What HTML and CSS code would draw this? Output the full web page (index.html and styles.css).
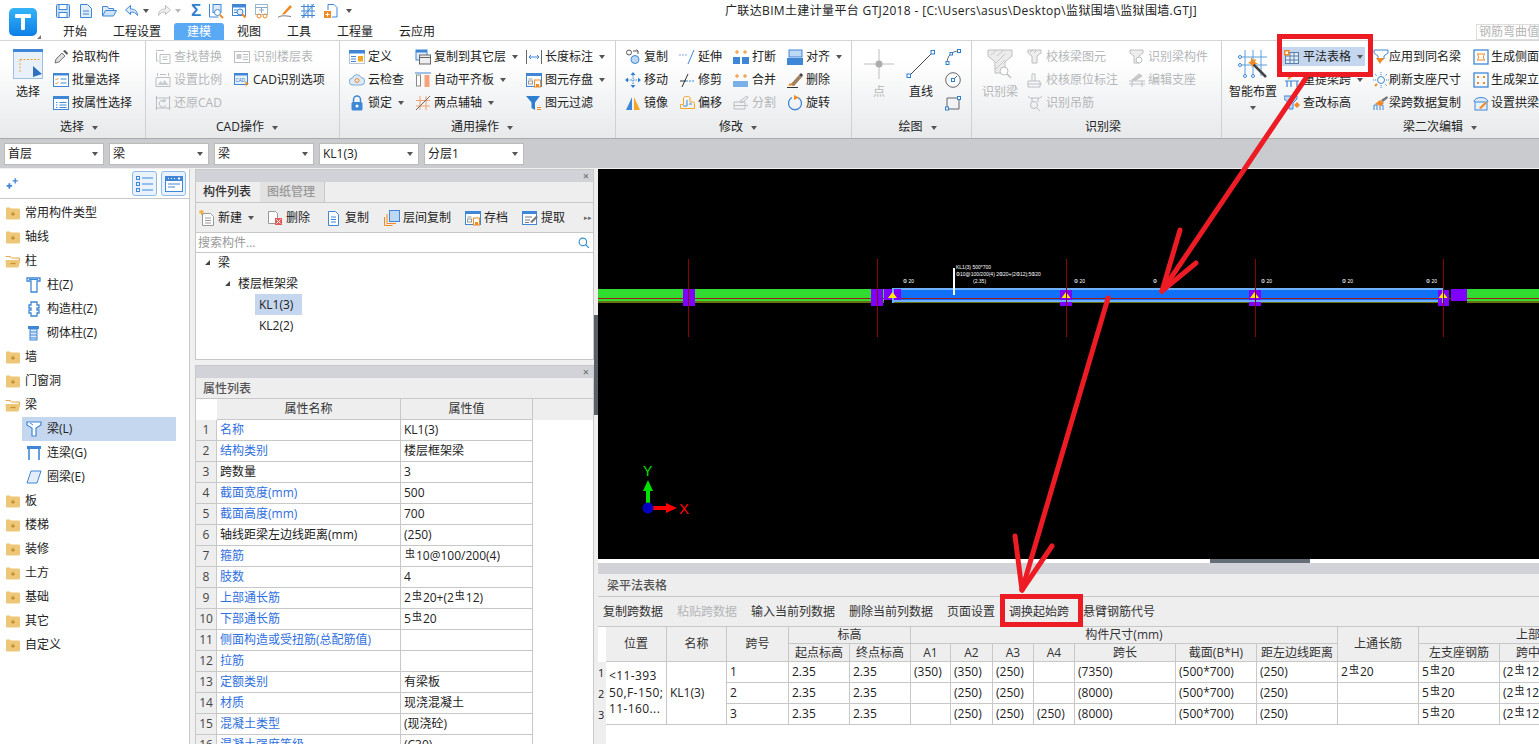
FILE: index.html
```html
<!DOCTYPE html>
<html lang="zh-CN">
<head>
<meta charset="utf-8">
<title>广联达BIM土建计量平台 GTJ2018</title>
<link rel="stylesheet" href="styles.css">
</head>
<body>
<svg class="sprite" xmlns="http://www.w3.org/2000/svg">
<defs>
<symbol id="save" viewBox="0 0 16 16"><rect x="1.5" y="1.5" width="13" height="13" rx="1" fill="#cfe3f8" stroke="#3f87d6"/><rect x="4" y="1.5" width="8" height="5" fill="#fff" stroke="#3f87d6"/><rect x="4" y="9.5" width="8" height="5" fill="#fff" stroke="#3f87d6"/></symbol>
<symbol id="doc" viewBox="0 0 16 16"><path d="M2.5 1.5h7l4 4v9h-11z" fill="#e3eefa" stroke="#3f87d6"/><path d="M5 8h6M5 11h6" stroke="#3f87d6"/></symbol>
<symbol id="open" viewBox="0 0 16 16"><path d="M1.5 13V3.500h5l1 2h5v2" fill="#e3eefa" stroke="#3f87d6"/><path d="M1.500 13l3-5.500h11l-3 5.500z" fill="#cfe3f8" stroke="#3f87d6"/></symbol>
<symbol id="undo" viewBox="0 0 16 16"><path d="M6.500 2.500L1.500 7l5 4.500V9c3 0 5.500 .5 7 3.500 0-4.500-2.500-6.500-7-6.500z" fill="#dbe9f8" stroke="#3f87d6"/></symbol>
<symbol id="redo" viewBox="0 0 16 16"><path d="M9.500 2.500l5 4.500-5 4.500V9c-3 0-5.500 .5-7 3.500 0-4.500 2.500-6.500 7-6.500z" fill="#f2f2f2" stroke="#bbbec2"/></symbol>
<symbol id="qa1" viewBox="0 0 16 16"><path d="M1.500 1v13h9" fill="none" stroke="#3f87d6"/><rect x="5" y="1.500" width="8" height="8" fill="#dbe9f8" stroke="#3f87d6"/><circle cx="9.500" cy="9.500" r="3" fill="#fff" stroke="#3f87d6"/><path d="M12 12l3 3" stroke="#f08a24" stroke-width="2"/></symbol>
<symbol id="qa2" viewBox="0 0 16 16"><rect x="1.500" y="1.500" width="13" height="11" fill="#fff" stroke="#3f87d6"/><rect x="1.500" y="1.500" width="13" height="3" fill="#3f87d6"/><circle cx="9" cy="9" r="3" fill="#e3eefa" stroke="#3f87d6"/><path d="M11 11l3.500 3.500" stroke="#f08a24" stroke-width="2"/><path d="M3 7h3M3 9.500h3" stroke="#3f87d6"/></symbol>
<symbol id="qa3" viewBox="0 0 16 16"><rect x="1.500" y="1.500" width="12" height="10" fill="#fff" stroke="#9fb8d4"/><path d="M1.500 4.500h12M5 7h5M7.500 5v5" stroke="#8aa8c8"/><circle cx="5" cy="13" r="2" fill="none" stroke="#f08a24"/><circle cx="11" cy="13" r="2" fill="none" stroke="#f08a24"/></symbol>
<symbol id="qa4" viewBox="0 0 16 16"><path d="M6 10l7-8 2 2-7 7-3 1z" fill="#f08a24"/><path d="M1 14.500c2-2 6-2 13-1" fill="none" stroke="#777"/></symbol>
<symbol id="qa5" viewBox="0 0 16 16"><path d="M1 3.500h14M1 8h14M1 12.500h14M4 1v14M8 1v14M12 1v14M2 15L14 1" fill="none" stroke="#3f87d6"/></symbol>
<symbol id="qa6" viewBox="0 0 16 16"><path d="M5 7V1.500h6l3 3V14h-5" fill="#fff" stroke="#3f87d6"/><rect x="1" y="8" width="7" height="7" fill="#f08a24"/><path d="M4.500 9.500v4M2.500 11.500h4" stroke="#fff"/></symbol>
<symbol id="big-sel" viewBox="0 0 30 30"><rect x=".5" y=".5" width="29" height="29" fill="#e8f1fa" stroke="#9fc0e4"/><rect width="30" height="3" fill="#3f87d6"/><path d="M7 10.500h20M7 10.500v14" fill="none" stroke="#f0a030" stroke-dasharray="2 1.500"/><path d="M20 17l9 8-9 3z" fill="#2f6fc0"/></symbol>
<symbol id="drop" viewBox="0 0 16 16"><path d="M3 10l6-6 3 3-6 6-4 1z" fill="#ddd" stroke="#777"/><path d="M10 2l2-1 3 3-1 2z" fill="#555"/></symbol>
<symbol id="batch" viewBox="0 0 16 16"><rect x=".5" y="1.500" width="15" height="13" fill="#fff" stroke="#3f87d6"/><rect y="1" width="16" height="2.500" fill="#3f87d6"/><path d="M2.500 7l1 1 2-2M2.500 11l1 1 2-2" fill="none" stroke="#f08a24"/><path d="M7.500 7h6M7.500 11h6" stroke="#3f87d6"/></symbol>
<symbol id="bya" viewBox="0 0 16 16"><rect x=".5" y="1.500" width="15" height="13" fill="#fff" stroke="#3f87d6"/><rect y="1" width="16" height="3" fill="#3f87d6"/><path d="M6.500 7.500h7M6.500 10h7M6.500 12.500h7M3 7.500h1.500M3 10h1.500M3 12.500h1.500" stroke="#3f87d6"/></symbol>
<symbol id="find" viewBox="0 0 16 16" stroke="#bbbec2" fill="none"><path d="M1 1.500h8M5 5.500h10v9H5zM7.500 8h5M7.500 10.500h5M1.500 3v9h2"/></symbol>
<symbol id="scale" viewBox="0 0 16 16" stroke="#bbbec2" fill="none"><path d="M1 5.500h14v9H1zM2.500 1v3M13.500 1v3M5 2.500h6"/><path d="M2.500 13l3-4 2 2 2-3 4 5z" fill="#c9ccd0" stroke="none"/></symbol>
<symbol id="rest" viewBox="0 0 16 16" stroke="#bbbec2" fill="none"><path d="M1.500 1v14M14.500 1v14M.5 3h15M.5 13h15M11 10a3.500 3.500 0 1 1-1-4M10 3.500V6.500h-3"/></symbol>
<symbol id="floor" viewBox="0 0 16 16" stroke="#bbbec2" fill="none"><rect x=".5" y="2.500" width="15" height="11"/><rect x="2.500" y="5" width="5" height="5" fill="#c9ccd0" stroke="none"/><path d="M9 5.500h5M9 8h5M9 10.500h5"/></symbol>
<symbol id="cad" viewBox="0 0 16 16"><rect x=".5" y="1.500" width="13" height="11" fill="#e8f1fa" stroke="#3f87d6"/><rect y="1" width="14" height="2.500" fill="#3f87d6"/><text x="1.500" y="10" font-size="4.500" font-family="Liberation Sans" fill="#2f6fc0">CAD</text><path d="M11 9l4 3-2 .5L12 15z" fill="#f08a24"/></symbol>
<symbol id="def" viewBox="0 0 16 16"><rect x=".5" y="1.500" width="15" height="13" fill="#fff" stroke="#b9c4cf"/><rect y="1" width="16" height="3.500" fill="#3f87d6"/><path d="M2 7.500h5M2 10h5M2 12.500h5" stroke="#3f87d6"/><rect x="9" y="7" width="5" height="5.500" fill="#f5a623"/></symbol>
<symbol id="cloud" viewBox="0 0 16 16"><path d="M4 13a3.500 3.500 0 0 1-.5-7 4.500 4.500 0 0 1 8.500-.5A3.700 3.700 0 0 1 12 13z" fill="#dbe9f8" stroke="#7aa8d8"/><circle cx="8" cy="8.500" r="2" fill="none" stroke="#f08a24"/></symbol>
<symbol id="lock" viewBox="0 0 16 16"><path d="M4.500 7V4.500a3.500 3.500 0 0 1 7 0V7" fill="none" stroke="#3f87d6" stroke-width="1.500"/><rect x="2.500" y="7" width="11" height="8.500" rx="1.500" fill="#3f87d6"/><circle cx="8" cy="11" r="1.500" fill="#fff"/></symbol>
<symbol id="copyl" viewBox="0 0 16 16"><rect x="1" y="1" width="11" height="10" fill="#e3eefa" stroke="#3f87d6"/><rect x="1" y="1" width="11" height="2.500" fill="#3f87d6"/><rect x="4.500" y="6" width="11" height="9" fill="#eee" stroke="#666"/><path d="M4.500 8.500h11" stroke="#666"/></symbol>
<symbol id="flush" viewBox="0 0 16 16"><path d="M0 1h16" stroke="#3f87d6"/><rect x="1.500" y="3" width="4" height="11" fill="#fff" stroke="#888"/><rect x="9.500" y="3" width="5" height="12" fill="#f5a27a"/></symbol>
<symbol id="aux" viewBox="0 0 16 16" fill="none"><path d="M5 1v14M11 1v14M1 5.500h14M1 11h14" stroke="#f0a070"/><path d="M1 15L15 1" stroke="#666"/></symbol>
<symbol id="dim" viewBox="0 0 16 16" fill="none"><path d="M.5 1v14M15.500 1v14" stroke="#666"/><path d="M3 8h10M5 6L3 8l2 2M11 6l2 2-2 2" stroke="#3f87d6"/></symbol>
<symbol id="store" viewBox="0 0 16 16"><rect x=".5" y="1.500" width="15" height="13" fill="#fff" stroke="#3f87d6"/><rect y="1" width="16" height="3" fill="#3f87d6"/><rect x="2.500" y="6.500" width="4" height="1" fill="#999"/><rect x="2.500" y="9" width="4" height="3" fill="none" stroke="#999"/><rect x="8.500" y="8" width="6" height="7" fill="#fff" stroke="#f08a24"/><rect x="10" y="12" width="3" height="3" fill="#f08a24"/></symbol>
<symbol id="filter" viewBox="0 0 16 16"><path d="M0 1h14L9 7.500V15L5.500 13V7.500z" fill="#2f7fd0"/><path d="M11 12.500h4M11 14.500h4" stroke="#f08a24"/></symbol>
<symbol id="copy" viewBox="0 0 16 16" fill="none"><circle cx="4" cy="3.500" r="2.500" stroke="#555"/><circle cx="10" cy="10.500" r="4" fill="#bcd8f5" stroke="#3f87d6"/><path d="M8 2h5l-1.500-1.500M13 2v3" stroke="#555"/></symbol>
<symbol id="extend" viewBox="0 0 16 16" fill="none"><path d="M0 6h9" stroke="#7aa8d8" stroke-dasharray="2 1"/><path d="M9 15L15 1" stroke="#3f87d6"/></symbol>
<symbol id="trim" viewBox="0 0 16 16" fill="none"><path d="M1 9h6" stroke="#333"/><path d="M7 9h9" stroke="#3f87d6" stroke-dasharray="2 1"/><path d="M3 15l6-13" stroke="#333"/></symbol>
<symbol id="move" viewBox="0 0 16 16"><path d="M8 0l2.500 3h-5zM8 16l2.500-3h-5zM0 8l3-2.500v5zM16 8l-3-2.500v5z" fill="#2f7fd0"/><path d="M8 3v10M3 8h10" stroke="#2f7fd0" stroke-dasharray="1.500 1"/></symbol>
<symbol id="mirror" viewBox="0 0 16 16"><path d="M7 2v13H1z" fill="#3f87d6"/><path d="M9 2v13h6z" fill="#f5a623"/></symbol>
<symbol id="offset" viewBox="0 0 16 16" fill="none"><path d="M1.500 13.500v-4h3V4a2 2 0 0 1 2-2.500h2A2 2 0 0 1 11 4v3h3a1.500 1.500 0 0 1 1.500 1.500v5z" stroke="#f5a623"/><path d="M4 11h4V5M10 9h3" stroke="#3f87d6"/></symbol>
<symbol id="break" viewBox="0 0 16 16"><path d="M0 8h7v7H0zM9 8h7v7H9z" fill="#3f87d6"/><path d="M2 3h4M4 1v4M10 3h4M12 1v4" stroke="#f08a24"/></symbol>
<symbol id="merge" viewBox="0 0 16 16"><path d="M0 9h15v6H0z" fill="#7ab0e8"/><path d="M2 4h4M4 2v4M10 4h4M12 2v4" stroke="#f08a24"/></symbol>
<symbol id="split" viewBox="0 0 16 16" fill="none" stroke="#bbbec2"><path d="M1 7h11v7H1zM1 10.500h14M7 6l7-5 1 2-7 5z"/></symbol>
<symbol id="align" viewBox="0 0 16 16"><rect x="2" y="1" width="13" height="7" fill="#bcd8f5" stroke="#3f87d6"/><rect y="9" width="16" height="7" fill="#3f87d6"/></symbol>
<symbol id="del" viewBox="0 0 16 16"><path d="M0 15.500h11" stroke="#333"/><path d="M3 13L12 3l3 2-8 9z" fill="#a08060"/><path d="M12 3l2-2 2 2-1 2z" fill="#444"/><path d="M1 14l2-3 3 2z" fill="#f08a24"/></symbol>
<symbol id="rotate" viewBox="0 0 16 16" fill="none"><path d="M5 2.500a6.500 6.500 0 1 0 6 0" stroke="#3f87d6" stroke-width="1.300"/><path d="M7 0l5 2.500-5 2.500z" fill="#f08a24"/></symbol>
<symbol id="point" viewBox="0 0 30 30"><path d="M15 0v30M0 15h30" stroke="#bbbec2"/><circle cx="15" cy="15" r="3.500" fill="#aaadb0"/></symbol>
<symbol id="line" viewBox="0 0 30 30"><path d="M3 27L27 3" stroke="#444"/><rect x="1" y="25" width="3.500" height="3.500" fill="#fff" stroke="#2f7fd0"/><rect x="25" y="1.500" width="3.500" height="3.500" fill="#fff" stroke="#2f7fd0"/></symbol>
<symbol id="arc" viewBox="0 0 16 16" fill="none"><path d="M2 14C2 7 7 2 14 2" stroke="#666"/><rect x="1" y="12.500" width="3" height="3" fill="#fff" stroke="#2f7fd0"/><rect x="12.500" y=".5" width="3" height="3" fill="#fff" stroke="#2f7fd0"/><rect x="5" y="3.500" width="2.500" height="2.500" fill="#fff" stroke="#2f7fd0"/></symbol>
<symbol id="circle" viewBox="0 0 16 16" fill="none"><circle cx="8" cy="8" r="7.300" stroke="#666"/><path d="M8 8l4-4" stroke="#666"/><rect x="6.500" y="6.500" width="3" height="3" fill="#fff" stroke="#2f7fd0"/></symbol>
<symbol id="rect" viewBox="0 0 16 16" fill="none"><path d="M2 3h12v11H2z" stroke="#666"/><rect x=".5" y="12" width="3" height="3" fill="#fff" stroke="#2f7fd0"/><rect x="12.500" y="1.500" width="3" height="3" fill="#fff" stroke="#2f7fd0"/></symbol>
<symbol id="recog" viewBox="0 0 30 30"><path d="M3 1h24v6l-7 6v11H10V13L3 7z" fill="#ececec" stroke="#bbbec2"/><path d="M6 6l6-5M12 7l7-6M11 14l9-9M11 20l9-9" stroke="#c6c8cb"/><circle cx="19" cy="22" r="4" fill="#fff" stroke="#bbbec2"/><path d="M22 25l4 4" stroke="#bbbec2" stroke-width="1.500"/></symbol>
<symbol id="chk1" viewBox="0 0 16 16" fill="none" stroke="#bbbec2"><path d="M1 1h13v3l-4 3v7H5V7L1 4z" fill="#eee"/><path d="M3 3l3-2M7 4l3-3"/></symbol>
<symbol id="chk2" viewBox="0 0 16 16" fill="none" stroke="#bbbec2"><path d="M1 9h12v6H1zM5 9V2h3v7M1 12h14"/></symbol>
<symbol id="hang" viewBox="0 0 16 16" fill="none" stroke="#bbbec2"><path d="M1 1l2 2h10l2-2M5 3v4M11 3v4"/><circle cx="7" cy="10" r="3.500"/><path d="M10 13l3 3"/></symbol>
<symbol id="chk3" viewBox="0 0 16 16" fill="none" stroke="#bbbec2"><path d="M1 1h13v3l-4 3v7H5V7L1 4z" fill="#eee"/><circle cx="10" cy="11" r="3" fill="#fff"/></symbol>
<symbol id="sup" viewBox="0 0 16 16" fill="none" stroke="#bbbec2"><path d="M0 9h16M3 9v6M13 9v6M0 12h16"/><path d="M3 8l7-6 3 2-6 4z" fill="#ccc"/></symbol>
<symbol id="smart" viewBox="0 0 30 30" fill="none"><path d="M7 1v26M15 1v26M23 1v26M2 8h27M2 16h27" stroke="#5b9ee0"/><path d="M13 13l15 15" stroke="#444" stroke-width="2.500"/><path d="M13 8l2 3 3-1-1 3 3 2-4 0-2 3-1-3-3-1 3-2z" fill="#f08a24"/><circle cx="2" cy="8" r="1.500" fill="#fff" stroke="#3f87d6"/><circle cx="2" cy="16" r="1.500" fill="#fff" stroke="#3f87d6"/><circle cx="7" cy="27" r="1.500" fill="#fff" stroke="#3f87d6"/><circle cx="15" cy="27" r="1.500" fill="#fff" stroke="#3f87d6"/></symbol>
<symbol id="table" viewBox="0 0 16 16"><rect x="1.500" y="3.500" width="13" height="11" fill="#e3eefa" stroke="#5a7fa8"/><path d="M1.500 7h13M1.500 11h13M6 3.500v11M10 3.500v11" stroke="#5a7fa8"/><rect y="1" width="5.500" height="5.500" fill="#f08a24"/><rect x="1.500" y="2.500" width="2.500" height="2.500" fill="#fff"/></symbol>
<symbol id="respan" viewBox="0 0 16 16" fill="none"><path d="M1 9h14M3 9v6M13 9v6M7 9v6" stroke="#3f87d6" stroke-width="1.200"/><path d="M4 7l7-6" stroke="#f08a24" stroke-width="2"/></symbol>
<symbol id="elev" viewBox="0 0 16 16"><path d="M0 1h13v3l-4 4v6H5V8L0 4z" fill="#bcd8f5" stroke="#3f87d6"/><path d="M10 10l3-3 3 3-3 3z" fill="#f08a24"/></symbol>
<symbol id="apply" viewBox="0 0 16 16"><path d="M1 1h14v3l-4 3v3H5V7L1 4z" fill="#fff" stroke="#3f87d6"/><path d="M3 9h8l-4 6z" fill="#f08a24"/></symbol>
<symbol id="refresh" viewBox="0 0 16 16" fill="none"><circle cx="8" cy="8" r="3.500" stroke="#3f87d6"/><path d="M8 0v3M8 13v3M0 8h3M13 8h3M2 2l2 2M12 12l2 2M14 2l-2 2" stroke="#3f87d6" stroke-dasharray="1 1"/><path d="M2 14l2-2" stroke="#f08a24" stroke-width="2"/></symbol>
<symbol id="brush" viewBox="0 0 16 16"><path d="M1 15V10h3v5M7 15v-5h3v5" fill="none" stroke="#3f87d6"/><path d="M2 9l5-4 4 3-3 3z" fill="#f08a24"/><path d="M8 5l6-4 1 2-5 4z" fill="#777"/></symbol>
<symbol id="side" viewBox="0 0 16 16" fill="none"><rect x="1" y="1" width="14" height="14" stroke="#3f87d6" stroke-width="1.300"/><path d="M4 5h8M4 11h8M4 5c2 1 2 5 0 6M12 5c-2 1-2 5 0 6" stroke="#f08a24"/></symbol>
<symbol id="erect" viewBox="0 0 16 16"><rect x="1" y="1" width="14" height="14" fill="none" stroke="#3f87d6" stroke-width="1.300"/><path d="M4 4h2v2H4zM10 4h2v2h-2zM4 10h2v2H4zM10 10h2v2h-2z" fill="#f08a24"/></symbol>
<symbol id="arch" viewBox="0 0 16 16"><path d="M1 7C1 1 15 1 15 7" fill="#dbe9f8" stroke="#3f87d6"/><rect x="2" y="7" width="12" height="8" fill="#e8f1fa" stroke="#3f87d6"/><path d="M6 13l6-6 2 1-6 6z" fill="#f08a24"/></symbol>
<symbol id="fplus" viewBox="0 0 16 16"><path d="M1 3.500q0-1 1-1h3l1 1h7q2 0 2 1v9q0 1-1 1H2q-1 0-1-1z" fill="#eec678"/><path d="M6 9h4M8 7v4" stroke="#c8922e" stroke-width="1.300"/></symbol>
<symbol id="fminus" viewBox="0 0 16 16"><path d="M.5 3.500h5l1 1.500h8v2" fill="#fbe6b8" stroke="#dcb060"/><path d="M.5 7h15l-2 7.500H1z" fill="#eec678"/><path d="M5.500 10.500h5" stroke="#c8922e" stroke-width="1.300"/></symbol>
<symbol id="col" viewBox="0 0 16 16" fill="none" stroke="#3f87d6"><path d="M1 1h13v3h-3v11H5V4H1z" stroke-width="1.300"/><path d="M3 2.500h9" /></symbol>
<symbol id="col2" viewBox="0 0 16 16" fill="none" stroke="#3f87d6" stroke-width="1.300"><path d="M5 1h6v3h2v3h-2v2h2v3h-2v3H5v-3H3V9h2V7H3V4h2z"/></symbol>
<symbol id="col3" viewBox="0 0 16 16"><rect x="2" y="1" width="11" height="3" fill="#3f87d6"/><rect x="4" y="4" width="7" height="11" fill="#dbe9f8" stroke="#3f87d6"/><path d="M4 7h7M4 10h7M4 13h7" stroke="#3f87d6"/></symbol>
<symbol id="beam" viewBox="0 0 16 16" fill="none" stroke="#3f87d6"><path d="M1 1h14v3l-5 3v8H6V7L1 4z" fill="#fff" stroke-width="1.200"/><path d="M4 2l3 2" stroke="#3f87d6"/></symbol>
<symbol id="lian" viewBox="0 0 16 16"><rect x="1" y="1" width="14" height="3" fill="#3f87d6"/><path d="M3 4v11M13 4v11" stroke="#3f87d6" stroke-width="1.600"/></symbol>
<symbol id="ring" viewBox="0 0 16 16"><path d="M5 2h10l-4 12H1z" fill="#e3eefa" stroke="#3f87d6"/></symbol>
<symbol id="newd" viewBox="0 0 16 16"><path d="M3.500 3.500h8l3 3v9h-11z" fill="#fff" stroke="#999"/><path d="M6 8h6M6 10.500h6M6 13h6" stroke="#999"/><path d="M0 2h5M2.500 0v5M1 .5l3 3M4 .5l-3 3" stroke="#f5a623"/></symbol>
<symbol id="deld" viewBox="0 0 16 16"><path d="M1.500 1.500h7l2 2v10h-9z" fill="#fff" stroke="#999"/><rect x="8" y="8" width="7" height="7" fill="#e25a5a"/><path d="M9.500 9.500l4 4M13.500 9.500l-4 4" stroke="#fff"/></symbol>
<symbol id="copyd" viewBox="0 0 16 16"><path d="M2.500 1.500h7l3 3v11h-10z" fill="#fff" stroke="#3f87d6"/><path d="M5 7h5M5 9.500h5M5 12h5" stroke="#3f87d6"/></symbol>
<symbol id="layers" viewBox="0 0 16 16"><rect x="5.500" y=".5" width="10" height="11" fill="#bcd8f5" stroke="#3f87d6"/><path d="M3 4v9.500h9M.5 7v8.500h8" fill="none" stroke="#f08a24"/></symbol>
<symbol id="pull" viewBox="0 0 16 16"><rect x=".5" y="1.500" width="14" height="13" fill="#fff" stroke="#3f87d6"/><rect y="1" width="15" height="3" fill="#3f87d6"/><path d="M3 7h7M3 10h5M3 12.500h4" stroke="#777"/><path d="M8 12l6-6 2 1-6 6z" fill="#777"/></symbol>
<symbol id="hdr1" viewBox="0 0 18 18" fill="none" stroke="#3f87d6"><rect x=".5" y="1.500" width="3" height="3"/><rect x=".5" y="7.500" width="3" height="3"/><rect x=".5" y="13.500" width="3" height="3"/><path d="M6 3h11M6 9h11M6 15h11"/></symbol>
<symbol id="hdr2" viewBox="0 0 18 18"><rect x=".5" y="1.500" width="17" height="15" fill="#fff" stroke="#3f87d6"/><rect y="1" width="18" height="5" fill="#3f87d6"/><path d="M3 3.500h1M6 3.500h1M9 3.500h1M13 3l2 0-1 1.500z" fill="#fff" stroke="#fff"/><path d="M3 9h12M3 12h7" stroke="#3f87d6"/></symbol>
<symbol id="sparks" viewBox="0 0 16 16"><path d="M4 6h3v3h3v3H7v3H4v-3H1V9h3z" fill="#3f87d6" transform="scale(.7) translate(0 4)"/><path d="M11 1h2v3h3v2h-3v3h-2V6H8V4h3z" fill="#3f87d6" transform="scale(.75) translate(2 1)"/></symbol>
<symbol id="mag" viewBox="0 0 16 16" fill="none" stroke="#2f8fd0" stroke-width="1.500"><circle cx="6.500" cy="6.500" r="5"/><path d="M10 10l4.500 4.500"/></symbol>
</defs>
</svg>

<div class="page">
  <header class="top">
    <div class="logo">
      <svg class="logo-mark" viewBox="0 0 28 28"><defs><linearGradient id="lg" x1="0" y1="0" x2="0" y2="1"><stop offset="0" stop-color="#35b4f8"/><stop offset="1" stop-color="#0c7fe6"/></linearGradient></defs><rect width="28" height="28" rx="5" fill="url(#lg)"/><rect x="6" y="6" width="16" height="4" rx="1" fill="#fff"/><rect x="12" y="6" width="4" height="16" rx="1" fill="#fff"/></svg>
      <span class="logo-corner"></span>
    </div>
    <div class="top-main">
      <div class="qat">
        <svg class="qi"><use href="#save"/></svg>
        <svg class="qi"><use href="#doc"/></svg>
        <svg class="qi"><use href="#open"/></svg>
        <span class="qgroup"><svg class="qi"><use href="#undo"/></svg><i class="caret qcaret"></i></span>
        <span class="qgroup"><svg class="qi"><use href="#redo"/></svg><i class="caret qcaret off"></i></span>
        <span class="sigma">Σ</span>
        <svg class="qi"><use href="#qa1"/></svg>
        <svg class="qi"><use href="#qa2"/></svg>
        <svg class="qi"><use href="#qa3"/></svg>
        <svg class="qi"><use href="#qa4"/></svg>
        <svg class="qi"><use href="#qa5"/></svg>
        <svg class="qi"><use href="#qa6"/></svg>
        <i class="caret qmore"></i>
        <span class="title">广联达BIM土建计量平台 GTJ2018 - [C:\Users\asus\Desktop\监狱围墙\监狱围墙.GTJ]</span>
      </div>
      <nav class="tabs">
        <span class="tab">开始</span><span class="tab">工程设置</span><span class="tab active">建模</span><span class="tab">视图</span><span class="tab">工具</span><span class="tab">工程量</span><span class="tab">云应用</span>
        <span class="topsearch">钢筋弯曲值调</span>
      </nav>
    </div>
  </header>

  <section class="ribbon">
    <div class="grp g1"><div class="gb">
      <div class="big"><svg class="b30"><use href="#big-sel"/></svg><span>选择</span></div>
      <div class="col c1-1">
        <div class="it"><svg class="i"><use href="#drop"/></svg>拾取构件</div>
        <div class="it"><svg class="i"><use href="#batch"/></svg>批量选择</div>
        <div class="it"><svg class="i"><use href="#bya"/></svg>按属性选择</div>
      </div></div><div class="gl">选择<i class="caret"></i></div></div>

    <div class="grp g2"><div class="gb">
      <div class="col c2-1">
        <div class="it off"><svg class="i"><use href="#find"/></svg>查找替换</div>
        <div class="it off"><svg class="i"><use href="#scale"/></svg>设置比例</div>
        <div class="it off"><svg class="i"><use href="#rest"/></svg>还原CAD</div>
      </div>
      <div class="col">
        <div class="it off"><svg class="i"><use href="#floor"/></svg>识别楼层表</div>
        <div class="it"><svg class="i"><use href="#cad"/></svg>CAD识别选项</div>
      </div></div><div class="gl">CAD操作<i class="caret"></i></div></div>

    <div class="grp g3"><div class="gb">
      <div class="col c3-1">
        <div class="it"><svg class="i"><use href="#def"/></svg>定义</div>
        <div class="it"><svg class="i"><use href="#cloud"/></svg>云检查</div>
        <div class="it"><svg class="i"><use href="#lock"/></svg>锁定<i class="caret"></i></div>
      </div>
      <div class="col c3-2">
        <div class="it"><svg class="i"><use href="#copyl"/></svg>复制到其它层<i class="caret"></i></div>
        <div class="it"><svg class="i"><use href="#flush"/></svg>自动平齐板<i class="caret"></i></div>
        <div class="it"><svg class="i"><use href="#aux"/></svg>两点辅轴<i class="caret"></i></div>
      </div>
      <div class="col">
        <div class="it"><svg class="i"><use href="#dim"/></svg>长度标注<i class="caret"></i></div>
        <div class="it"><svg class="i"><use href="#store"/></svg>图元存盘<i class="caret"></i></div>
        <div class="it"><svg class="i"><use href="#filter"/></svg>图元过滤</div>
      </div></div><div class="gl">通用操作<i class="caret"></i></div></div>

    <div class="grp g4"><div class="gb">
      <div class="col c4">
        <div class="it"><svg class="i"><use href="#copy"/></svg>复制</div>
        <div class="it"><svg class="i"><use href="#move"/></svg>移动</div>
        <div class="it"><svg class="i"><use href="#mirror"/></svg>镜像</div>
      </div>
      <div class="col c4">
        <div class="it"><svg class="i"><use href="#extend"/></svg>延伸</div>
        <div class="it"><svg class="i"><use href="#trim"/></svg>修剪</div>
        <div class="it"><svg class="i"><use href="#offset"/></svg>偏移</div>
      </div>
      <div class="col c4">
        <div class="it"><svg class="i"><use href="#break"/></svg>打断</div>
        <div class="it"><svg class="i"><use href="#merge"/></svg>合并</div>
        <div class="it off"><svg class="i"><use href="#split"/></svg>分割</div>
      </div>
      <div class="col">
        <div class="it"><svg class="i"><use href="#align"/></svg>对齐<i class="caret"></i></div>
        <div class="it"><svg class="i"><use href="#del"/></svg>删除</div>
        <div class="it"><svg class="i"><use href="#rotate"/></svg>旋转</div>
      </div></div><div class="gl">修改<i class="caret"></i></div></div>

    <div class="grp g5"><div class="gb">
      <div class="big off"><svg class="b30"><use href="#point"/></svg><span>点</span></div>
      <div class="big b-line"><svg class="b30"><use href="#line"/></svg><span>直线</span></div>
      <div class="col c5">
        <div class="it"><svg class="i"><use href="#arc"/></svg></div>
        <div class="it"><svg class="i"><use href="#circle"/></svg></div>
        <div class="it"><svg class="i"><use href="#rect"/></svg></div>
      </div></div><div class="gl">绘图<i class="caret"></i></div></div>

    <div class="grp g6"><div class="gb">
      <div class="big off"><svg class="b30"><use href="#recog"/></svg><span>识别梁</span></div>
      <div class="col c6-1">
        <div class="it off"><svg class="i"><use href="#chk1"/></svg>校核梁图元</div>
        <div class="it off"><svg class="i"><use href="#chk2"/></svg>校核原位标注</div>
        <div class="it off"><svg class="i"><use href="#hang"/></svg>识别吊筋</div>
      </div>
      <div class="col">
        <div class="it off"><svg class="i"><use href="#chk3"/></svg>识别梁构件</div>
        <div class="it off"><svg class="i"><use href="#sup"/></svg>编辑支座</div>
      </div></div><div class="gl">识别梁</div></div>

    <div class="grp g7"><div class="gb">
      <div class="big"><svg class="b30"><use href="#smart"/></svg><span>智能布置</span><i class="caret big-caret"></i></div>
      <div class="col c7-1">
        <div class="it on"><svg class="i"><use href="#table"/></svg>平法表格<i class="caret"></i></div>
        <div class="it"><svg class="i"><use href="#respan"/></svg>重提梁跨<i class="caret"></i></div>
        <div class="it"><svg class="i"><use href="#elev"/></svg>查改标高</div>
      </div>
      <div class="col c7-2">
        <div class="it"><svg class="i"><use href="#apply"/></svg>应用到同名梁</div>
        <div class="it"><svg class="i"><use href="#refresh"/></svg>刷新支座尺寸</div>
        <div class="it"><svg class="i"><use href="#brush"/></svg>梁跨数据复制</div>
      </div>
      <div class="col c7-3">
        <div class="it"><svg class="i"><use href="#side"/></svg>生成侧面</div>
        <div class="it"><svg class="i"><use href="#erect"/></svg>生成架立</div>
        <div class="it"><svg class="i"><use href="#arch"/></svg>设置拱梁</div>
      </div></div><div class="gl">梁二次编辑<i class="caret"></i></div></div>
  </section>

  <div class="selbar">
    <div class="sel">首层<i class="caret"></i></div>
    <div class="sel">梁<i class="caret"></i></div>
    <div class="sel">梁<i class="caret"></i></div>
    <div class="sel">KL1(3)<i class="caret"></i></div>
    <div class="sel">分层1<i class="caret"></i></div>
  </div>

  <main class="main">
    <aside class="nav">
      <div class="nav-head">
        <svg class="sparks"><use href="#sparks"/></svg>
        <span class="hbtn"><svg class="h18"><use href="#hdr1"/></svg></span>
        <span class="hbtn"><svg class="h18"><use href="#hdr2"/></svg></span>
      </div>
      <div class="nr"><svg class="i"><use href="#fplus"/></svg>常用构件类型</div>
      <div class="nr"><svg class="i"><use href="#fplus"/></svg>轴线</div>
      <div class="nr"><svg class="i"><use href="#fminus"/></svg>柱</div>
      <div class="nr child"><svg class="i"><use href="#col"/></svg>柱(Z)</div>
      <div class="nr child"><svg class="i"><use href="#col2"/></svg>构造柱(Z)</div>
      <div class="nr child"><svg class="i"><use href="#col3"/></svg>砌体柱(Z)</div>
      <div class="nr"><svg class="i"><use href="#fplus"/></svg>墙</div>
      <div class="nr"><svg class="i"><use href="#fplus"/></svg>门窗洞</div>
      <div class="nr"><svg class="i"><use href="#fminus"/></svg>梁</div>
      <div class="nr child cur"><svg class="i"><use href="#beam"/></svg>梁(L)</div>
      <div class="nr child"><svg class="i"><use href="#lian"/></svg>连梁(G)</div>
      <div class="nr child"><svg class="i"><use href="#ring"/></svg>圈梁(E)</div>
      <div class="nr"><svg class="i"><use href="#fplus"/></svg>板</div>
      <div class="nr"><svg class="i"><use href="#fplus"/></svg>楼梯</div>
      <div class="nr"><svg class="i"><use href="#fplus"/></svg>装修</div>
      <div class="nr"><svg class="i"><use href="#fplus"/></svg>土方</div>
      <div class="nr"><svg class="i"><use href="#fplus"/></svg>基础</div>
      <div class="nr"><svg class="i"><use href="#fplus"/></svg>其它</div>
      <div class="nr"><svg class="i"><use href="#fplus"/></svg>自定义</div>
    </aside>

    <div class="mid">
      <section class="pane list-pane">
        <div class="strip"><span class="x">×</span></div>
        <div class="ptabs"><span class="ptab active">构件列表</span><span class="ptab">图纸管理</span></div>
        <div class="ltool">
          <span class="lt w68"><svg class="i"><use href="#newd"/></svg>新建<i class="caret"></i></span>
          <span class="lt w59"><svg class="i"><use href="#deld"/></svg>删除</span>
          <span class="lt w58"><svg class="i"><use href="#copyd"/></svg>复制</span>
          <span class="lt w81"><svg class="i"><use href="#layers"/></svg>层间复制</span>
          <span class="lt w57"><svg class="i"><use href="#store"/></svg>存档</span>
          <span class="lt"><svg class="i"><use href="#pull"/></svg>提取</span>
          <span class="more">▸▸</span>
        </div>
        <div class="lsearch"><span>搜索构件...</span><svg class="mag"><use href="#mag"/></svg></div>
        <div class="ltree">
          <div class="lr l0"><i class="tri"></i>梁</div>
          <div class="lr l1"><i class="tri"></i>楼层框架梁</div>
          <div class="lr l2"><span class="lsel">KL1(3)</span></div>
          <div class="lr l2"><span>KL2(2)</span></div>
        </div>
      </section>
      <section class="pane prop-pane">
        <div class="strip"><span class="x">×</span></div>
        <div class="ptitle">属性列表</div>
        <table class="ptable">
          <colgroup><col class="pc0"><col class="pc1"><col class="pc2"><col></colgroup>
          <thead><tr><th class="blank"></th><th>属性名称</th><th>属性值</th><th class="fill"></th></tr></thead>
          <tbody>
            <tr><td class="n">1</td><td class="blue">名称</td><td>KL1(3)</td><td class="fill"></td></tr>
            <tr><td class="n">2</td><td class="blue">结构类别</td><td>楼层框架梁</td><td class="fill"></td></tr>
            <tr><td class="n">3</td><td>跨数量</td><td>3</td><td class="fill"></td></tr>
            <tr><td class="n">4</td><td class="blue">截面宽度(mm)</td><td>500</td><td class="fill"></td></tr>
            <tr><td class="n">5</td><td class="blue">截面高度(mm)</td><td>700</td><td class="fill"></td></tr>
            <tr><td class="n">6</td><td>轴线距梁左边线距离(mm)</td><td>(250)</td><td class="fill"></td></tr>
            <tr><td class="n">7</td><td class="blue">箍筋</td><td><sup class="rb">虫</sup>10@100/200(4)</td><td class="fill"></td></tr>
            <tr><td class="n">8</td><td class="blue">肢数</td><td>4</td><td class="fill"></td></tr>
            <tr><td class="n">9</td><td class="blue">上部通长筋</td><td>2<sup class="rb">虫</sup>20+(2<sup class="rb">虫</sup>12)</td><td class="fill"></td></tr>
            <tr><td class="n">10</td><td class="blue">下部通长筋</td><td>5<sup class="rb">虫</sup>20</td><td class="fill"></td></tr>
            <tr><td class="n">11</td><td class="blue">侧面构造或受扭筋(总配筋值)</td><td></td><td class="fill"></td></tr>
            <tr><td class="n">12</td><td class="blue">拉筋</td><td></td><td class="fill"></td></tr>
            <tr><td class="n">13</td><td class="blue">定额类别</td><td>有梁板</td><td class="fill"></td></tr>
            <tr><td class="n">14</td><td class="blue">材质</td><td>现浇混凝土</td><td class="fill"></td></tr>
            <tr><td class="n">15</td><td class="blue">混凝土类型</td><td>(现浇砼)</td><td class="fill"></td></tr>
            <tr><td class="n">16</td><td class="blue">混凝土强度等级</td><td>(C30)</td><td class="fill"></td></tr>
          </tbody>
        </table>
      </section>
    </div>

    <div class="gutter"><span class="thumb"></span></div>

    <div class="work">
      <svg class="canvas" viewBox="598 169 941 390" preserveAspectRatio="none">
        <rect x="598" y="169" width="941" height="390" fill="#000"/>
        <g>
          <rect x="598" y="289" width="286" height="12" fill="#2fdc2f"/>
          <rect x="598" y="301" width="286" height="2" fill="#6b7010"/>
          <rect x="1467" y="289" width="72" height="12" fill="#2fdc2f"/>
          <rect x="1467" y="301" width="72" height="2" fill="#6b7010"/>
          <rect x="892" y="288" width="552" height="14" fill="#6cb0ff"/>
          <rect x="894" y="290" width="548" height="10" fill="#1070f8"/>
          <rect x="892" y="302" width="552" height="1" fill="#6b7010"/>
          <rect x="598" y="298" width="941" height="1" fill="#a01818"/>
        </g>
        <g fill="#8000ff">
          <rect x="683" y="289" width="12" height="17"/>
          <rect x="871" y="289" width="12" height="17"/>
          <rect x="884" y="289" width="17" height="11"/>
          <rect x="1060" y="290" width="12" height="16"/>
          <rect x="1249" y="290" width="12" height="16"/>
          <rect x="1438" y="290" width="11" height="16"/>
          <rect x="1451" y="289" width="16" height="12"/>
        </g>
        <rect x="1060" y="300" width="12" height="2" fill="#6cb0ff"/>
        <rect x="1249" y="300" width="12" height="2" fill="#6cb0ff"/>
        <rect x="892" y="288" width="2" height="15" fill="#6cb0ff"/>
        <rect x="1442" y="288" width="2" height="15" fill="#6cb0ff"/>
        <g fill="#ffee00">
          <path d="M892.500 292l4.500 6h-9zM1066 292l4.500 6h-9zM1254.500 292l4.500 6h-9zM1443 292l4.500 6h-9z"/>
        </g>
        <g stroke="#8b0000">
          <path d="M688.500 259V337M877.500 259V337M1066.500 259V337M1255.500 259V337M1443.500 259V337"/>
        </g>
        <rect x="953" y="268" width="2" height="27" fill="#fff"/>
        <g class="tiny">
          <text x="956" y="269">KL1(3) 500*700</text>
          <text x="956" y="276">Φ10@100/200(4) 2Φ20+(2Φ12);5Φ20</text>
          <text x="973" y="283">(2.35)</text>
          <text x="903" y="283">Φ 20</text>
          <text x="1074" y="283">Φ 20</text>
          <text x="1153" y="283">Φ</text>
          <text x="1261" y="283">Φ 20</text>
          <text x="1342" y="283">Φ 20</text>
          <text x="1426" y="283">Φ 20</text>
        </g>
        <path d="M648 505V491" stroke="#00e000" stroke-width="4"/>
        <path d="M648 480l5 11h-10z" fill="#00e000"/>
        <path d="M650 508h16" stroke="#ff0000" stroke-width="4"/>
        <path d="M677 508l-11-5v10z" fill="#ff0000"/>
        <circle cx="648" cy="508" r="5.500" fill="#0000c0"/>
        <text class="ax-y" x="643" y="476">Y</text>
        <text class="ax-x" x="679" y="514">X</text>
      </svg>
      <div class="split"><span class="handle"></span></div>
      <section class="grid-pane">
        <div class="strip s11"></div>
        <div class="ptitle gt">梁平法表格</div>
        <div class="gtool">
          <span>复制跨数据</span><span class="dis">粘贴跨数据</span><span>输入当前列数据</span><span>删除当前列数据</span><span>页面设置</span><span>调换起始跨</span><span>悬臂钢筋代号</span>
        </div>
        <div class="gwrap">
          <table class="gtable">
            <colgroup>
              <col class="w8"><col class="w61"><col class="w60"><col class="w62"><col class="w61"><col class="w61"><col class="w40"><col class="w42"><col class="w41"><col class="w41"><col class="w101"><col class="w81"><col class="w81"><col class="w81"><col class="w81"><col class="w81"><col class="w81">
            </colgroup>
            <thead>
              <tr><th rowspan="2" class="corner"></th><th rowspan="2">位置</th><th rowspan="2">名称</th><th rowspan="2">跨号</th><th colspan="2">标高</th><th colspan="7">构件尺寸(mm)</th><th rowspan="2">上通长筋</th><th colspan="3">上部钢筋</th></tr>
              <tr class="sub"><th>起点标高</th><th>终点标高</th><th>A1</th><th>A2</th><th>A3</th><th>A4</th><th>跨长</th><th>截面(B*H)</th><th>距左边线距离</th><th>左支座钢筋</th><th>跨中钢筋</th><th>右支座钢筋</th></tr>
            </thead>
            <tbody>
              <tr><td class="n2">1</td><td rowspan="3" class="posc">&lt;11-393<br>50,F-150;<br>11-160...</td><td rowspan="3">KL1(3)</td><td>1</td><td>2.35</td><td>2.35</td><td>(350)</td><td>(350)</td><td>(250)</td><td></td><td>(7350)</td><td>(500*700)</td><td>(250)</td><td>2<sup class="rb">虫</sup>20</td><td>5<sup class="rb">虫</sup>20</td><td>(2<sup class="rb">虫</sup>12)</td><td></td></tr>
              <tr><td class="n2">2</td><td>2</td><td>2.35</td><td>2.35</td><td></td><td>(250)</td><td>(250)</td><td></td><td>(8000)</td><td>(500*700)</td><td>(250)</td><td></td><td>5<sup class="rb">虫</sup>20</td><td>(2<sup class="rb">虫</sup>12)</td><td></td></tr>
              <tr><td class="n2">3</td><td>3</td><td>2.35</td><td>2.35</td><td></td><td>(250)</td><td>(250)</td><td>(250)</td><td>(8000)</td><td>(500*700)</td><td>(250)</td><td></td><td>5<sup class="rb">虫</sup>20</td><td>(2<sup class="rb">虫</sup>12)</td><td></td></tr>
            </tbody>
          </table>
        </div>
      </section>
    </div>
  </main>

  <svg class="annot" viewBox="0 0 1539 744">
    <g fill="none" stroke="#ed1c24" stroke-width="5" stroke-linecap="round">
      <path stroke-linecap="butt" d="M1279.500 36.500h91v38h-91z"/>
      <path stroke-linecap="butt" d="M1002.500 596.500h78v28h-78z"/>
      <path d="M1306 78L1162 291"/>
      <path d="M1162 291L1180 230"/>
      <path d="M1162 291L1196 263"/>
      <path d="M1108 298L1022 590"/>
      <path d="M1022 590L1015 536"/>
      <path d="M1022 590L1052 546"/>
    </g>
  </svg>
</div>
</body>
</html>
```
FILE: styles.css
```css
* { box-sizing: border-box; }
html, body { margin: 0; padding: 0; height: 744px; overflow: hidden; background: #fff; }
body { font: 12px/16px "Open Sans", "Noto Sans CJK SC", sans-serif; color: #222; }
.sprite { position: absolute; width: 0; height: 0; }
.page { position: relative; width: 1539px; height: 744px; overflow: hidden; }

.caret { display: inline-block; width: 0; height: 0; margin-left: 6px; border: 3px solid transparent; border-top: 4px solid #555; border-bottom: 0; vertical-align: middle; }

.top { display: flex; height: 41px; background: #fff; border-bottom: 1px solid #d5d5d5; }
.logo { position: relative; width: 46px; flex: none; }
.logo-mark { display: block; width: 28px; height: 28px; margin: 8px 0 0 9px; }
.logo-corner { position: absolute; left: 37px; top: 35px; border: 2px solid transparent; border-right-color: #777; border-bottom-color: #777; }
.top-main { flex: 1; min-width: 0; }
.qat { display: flex; align-items: center; height: 21px; padding-left: 9px; }
.qi { display: block; width: 16px; height: 16px; flex: none; margin-right: 7px; }
.qgroup { display: flex; align-items: center; width: 32px; flex: none; }
.qgroup .qi { margin-right: 3px; }
.qcaret { margin-left: 0; }
.qcaret.off { border-top-color: #bbb; }
.sigma { width: 20px; flex: none; padding-left: 3px; font: bold 17px/20px "Liberation Sans", sans-serif; color: #2f7fd0; }
.qmore { margin-left: 0; }
.title { margin-left: 373px; white-space: nowrap; letter-spacing: .35px; }
.tabs { display: flex; height: 17px; margin-top: 2px; padding-left: 4px; align-items: stretch; }
.tab { padding: 0 13px; line-height: 18px; white-space: nowrap; }
.tab.active { background: #5aa9f5; color: #fff; border-radius: 3px 3px 0 0; }
.topsearch { margin-left: auto; width: 63px; height: 16px; margin-top: 1px; padding-left: 2px; border: 1px solid #ddd; color: #b5b5b5; line-height: 14px; overflow: hidden; white-space: nowrap; }

.ribbon { display: flex; height: 98px; background: linear-gradient(#fff 20%, #e7e9eb); border-bottom: 1px solid #aaa; overflow: hidden; }
.grp { position: relative; flex: none; padding-top: 4px; border-right: 1px solid #cfd2d5; }
.gb { display: flex; height: 71px; }
.gl { height: 22px; line-height: 22px; text-align: center; white-space: nowrap; }
.gl .caret { margin-left: 8px; }
.g1 { width: 146px; padding-left: 13px; }
.g2 { width: 194px; padding-left: 9px; }
.g3 { width: 276px; padding-left: 9px; }
.g4 { width: 236px; padding-left: 9px; }
.g5 { width: 120px; padding-left: 12px; }
.g6 { width: 250px; padding-left: 13px; }
.g7 { width: 420px; padding-left: 16px; border-right: 0; }
.col { flex: none; }
.c1-1 { margin-left: 10px; }
.c2-1 { width: 79px; }
.c3-1 { width: 66px; }
.c3-2 { width: 111px; }
.c4 { width: 54px; }
.c5 { margin-left: 9px; }
.c6-1 { width: 102px; margin-left: 12px; }
.c7-1 { width: 89px; margin-left: 16px; }
.c7-2 { width: 100px; }
.it { display: flex; align-items: center; height: 23px; white-space: nowrap; }
.it .i { margin-right: 3px; }
.c7-2 .it .i { margin-right: 0; }
.c7-3 .it .i { margin-right: 2px; }
.i { display: block; flex: none; width: 16px; height: 16px; }
.it.off, .big.off { color: #b4b6b9; }
.it.on { height: 19px; width: 83px; margin: 2px 0 2px -2px; padding-left: 2px; background: #c5d7ee; }
.big { position: relative; display: flex; flex-direction: column; align-items: center; width: 30px; flex: none; padding-top: 4px; white-space: nowrap; }
.b30 { display: block; width: 30px; height: 30px; margin-bottom: 5px; }
.big-caret { margin: 6px 0 0; }
.b-line { margin-left: 12px; }

.selbar { display: flex; gap: 5px; height: 29px; padding: 4px 0 0 4px; background: #c9cbce; }
.sel { display: flex; align-items: center; justify-content: space-between; width: 100px; height: 22px; padding: 0 5px 0 3px; background: #fff; border: 1px solid #bbb; }
.sel .caret { margin: 0; }

.main { display: flex; height: 576px; padding-top: 1px; background: #f0f0f0; }
.nav { width: 190px; flex: none; background: #fff; border-right: 1px solid #c8c8c8; }
.nav-head { display: flex; align-items: center; height: 30px; padding: 0 3px 0 6px; border-bottom: 1px solid #c8c8c8; margin-bottom: 2px; }
.sparks { width: 14px; height: 14px; margin-right: auto; }
.hbtn { display: flex; align-items: center; justify-content: center; width: 25px; height: 25px; margin-left: 4px; background: #eaf3fd; border: 1px solid #8cbcec; border-radius: 3px; }
.h18 { width: 18px; height: 18px; }
.nr { display: flex; align-items: center; height: 24px; padding-left: 5px; }
.nr .i { margin-right: 4px; }
.nr.child { padding-left: 26px; }
.nr.child .i { margin-right: 5px; }
.nr.cur { margin-left: 22px; width: 154px; padding-left: 4px; background: #c5d7ee; }

.mid { width: 399px; flex: none; margin-left: 5px; display: flex; flex-direction: column; gap: 5px; }
.pane { background: #fff; border: 1px solid #c8c8c8; overflow: hidden; }
.list-pane { height: 191px; flex: none; }
.prop-pane { flex: 1; min-height: 0; border-bottom: 0; }
.strip { position: relative; height: 12px; background: #d2d3d8; }
.s11 { height: 11px; }
.x { position: absolute; right: 4px; top: 0; font-size: 11px; line-height: 11px; color: #666; }
.ptabs { display: flex; height: 21px; background: #eee; border-bottom: 1px solid #c8c8c8; }
.ptab { width: 65px; padding-left: 7px; line-height: 20px; background: #e2e2e2; color: #999; border-right: 1px solid #c8c8c8; font-weight: 500; }
.ptab.active { background: #eee; color: #333; width: 64px; border-right: 0; }
.ltool { display: flex; align-items: center; height: 30px; padding-left: 3px; background: #eee; border-bottom: 1px solid #c8c8c8; white-space: nowrap; }
.lt { display: flex; align-items: center; flex: none; }
.lt .i { margin-right: 3px; }
.w68 { width: 68px; } .w59 { width: 59px; } .w58 { width: 58px; } .w81 { width: 81px; } .w57 { width: 57px; }
.more { margin-left: auto; margin-right: 1px; font-size: 7px; color: #666; }
.lsearch { display: flex; align-items: center; justify-content: space-between; height: 20px; padding: 0 3px 0 2px; border-bottom: 1px solid #c8c8c8; color: #999; }
.mag { width: 12px; height: 12px; }
.ltree { height: 106px; margin-top: -1px; }
.lr { display: flex; align-items: center; height: 21px; }
.tri { width: 0; height: 0; margin-right: 8px; border-left: 5px solid transparent; border-bottom: 5px solid #444; }
.l0 { padding-left: 9px; }
.l1 { padding-left: 29px; }
.l2 { padding-left: 59px; }
.l2 span { display: block; width: 47px; height: 21px; padding-left: 4px; line-height: 21px; }
.lsel { background: #c5d7ee; }

.ptitle { height: 21px; padding-left: 7px; line-height: 21px; background: #eee; color: #555; border-bottom: 1px solid #c8c8c8; font-weight: 500; }
.ptable { table-layout: fixed; width: 397px; border-collapse: separate; border-spacing: 0; }
.pc0 { width: 21px; } .pc1 { width: 184px; } .pc2 { width: 132px; }
.ptable th { height: 21px; padding: 0; font-weight: 400; background: #eee; color: #333; text-align: center; border-right: 1px solid #c8c8c8; border-bottom: 1px solid #c8c8c8; }
.ptable th.blank { background: #fff; border: 0; }
.ptable td { height: 21px; padding: 0 3px; border-right: 1px solid #c8c8c8; border-bottom: 1px solid #c8c8c8; white-space: nowrap; overflow: hidden; }
.ptable td.n { padding: 0; background: #eee; text-align: center; color: #444; }
.ptable td.blue { color: #2f6fe0; }
.ptable .fill { border: 0; }
.ptable th.fill { background: #eee; border-bottom: 0; }
.rb { font-size: 10px; line-height: 0; vertical-align: 3px; margin: 0 1px; }

.gutter { width: 4px; flex: none; background: #eee; }
.thumb { display: block; width: 4px; height: 100px; margin-top: 146px; background: #5a6068; }

.work { position: relative; width: 941px; flex: none; display: flex; flex-direction: column; }
.canvas { display: block; width: 941px; height: 390px; flex: none; }
.tiny { font: 5px "Liberation Sans", sans-serif; fill: #fff; }
.ax-y { font: 14px "Liberation Sans", sans-serif; fill: #00e000; }
.ax-x { font: 15px "Liberation Sans", sans-serif; fill: #ff0000; }
.split { position: relative; height: 4px; flex: none; background: #fff; }
.handle { display: block; width: 100px; height: 4px; margin-left: 612px; background: #666e78; }
.grid-pane { flex: 1; min-height: 0; background: #fff; overflow: hidden; }
.gt { height: 23px; line-height: 23px; padding-left: 9px; }
.gtool { display: flex; gap: 14px; height: 30px; padding-left: 5px; align-items: center; background: #eee; border-bottom: 1px solid #c8c8c8; white-space: nowrap; color: #333; }
.gtool .dis { color: #b4b6b9; }
.gwrap { overflow: hidden; height: 117px; background: linear-gradient(90deg, #eee 8px, #fff 8px); }
.gtable { table-layout: fixed; width: 1005px; border-collapse: separate; border-spacing: 0; }
.w8 { width: 8px; } .w60 { width: 60px; } .w62 { width: 62px; } .w61 { width: 61px; } .w40 { width: 40px; } .w42 { width: 42px; } .w41 { width: 41px; } .w101 { width: 101px; } .w81 { width: 81px; }
.gtable th { height: 17px; padding: 0; font-weight: 400; background: #eee; color: #333; text-align: center; border-right: 1px solid #c8c8c8; border-bottom: 1px solid #c8c8c8; white-space: nowrap; overflow: hidden; }
.gtable .sub th { height: 18px; }
.gtable th.corner { background: #fff; border: 0; }
.gtable td { height: 21px; padding: 0 3px; background: #fff; border-right: 1px solid #c8c8c8; border-bottom: 1px solid #c8c8c8; white-space: nowrap; overflow: hidden; }
.gtable td.n2 { padding: 0; background: #eee; border: 0; overflow: visible; font-size: 11px; }
.gtable td.posc { line-height: 16.500px; padding: 0 1px 0 3px; letter-spacing: .4px; }

.annot { position: absolute; left: 0; top: 0; width: 1539px; height: 744px; pointer-events: none; }
```
